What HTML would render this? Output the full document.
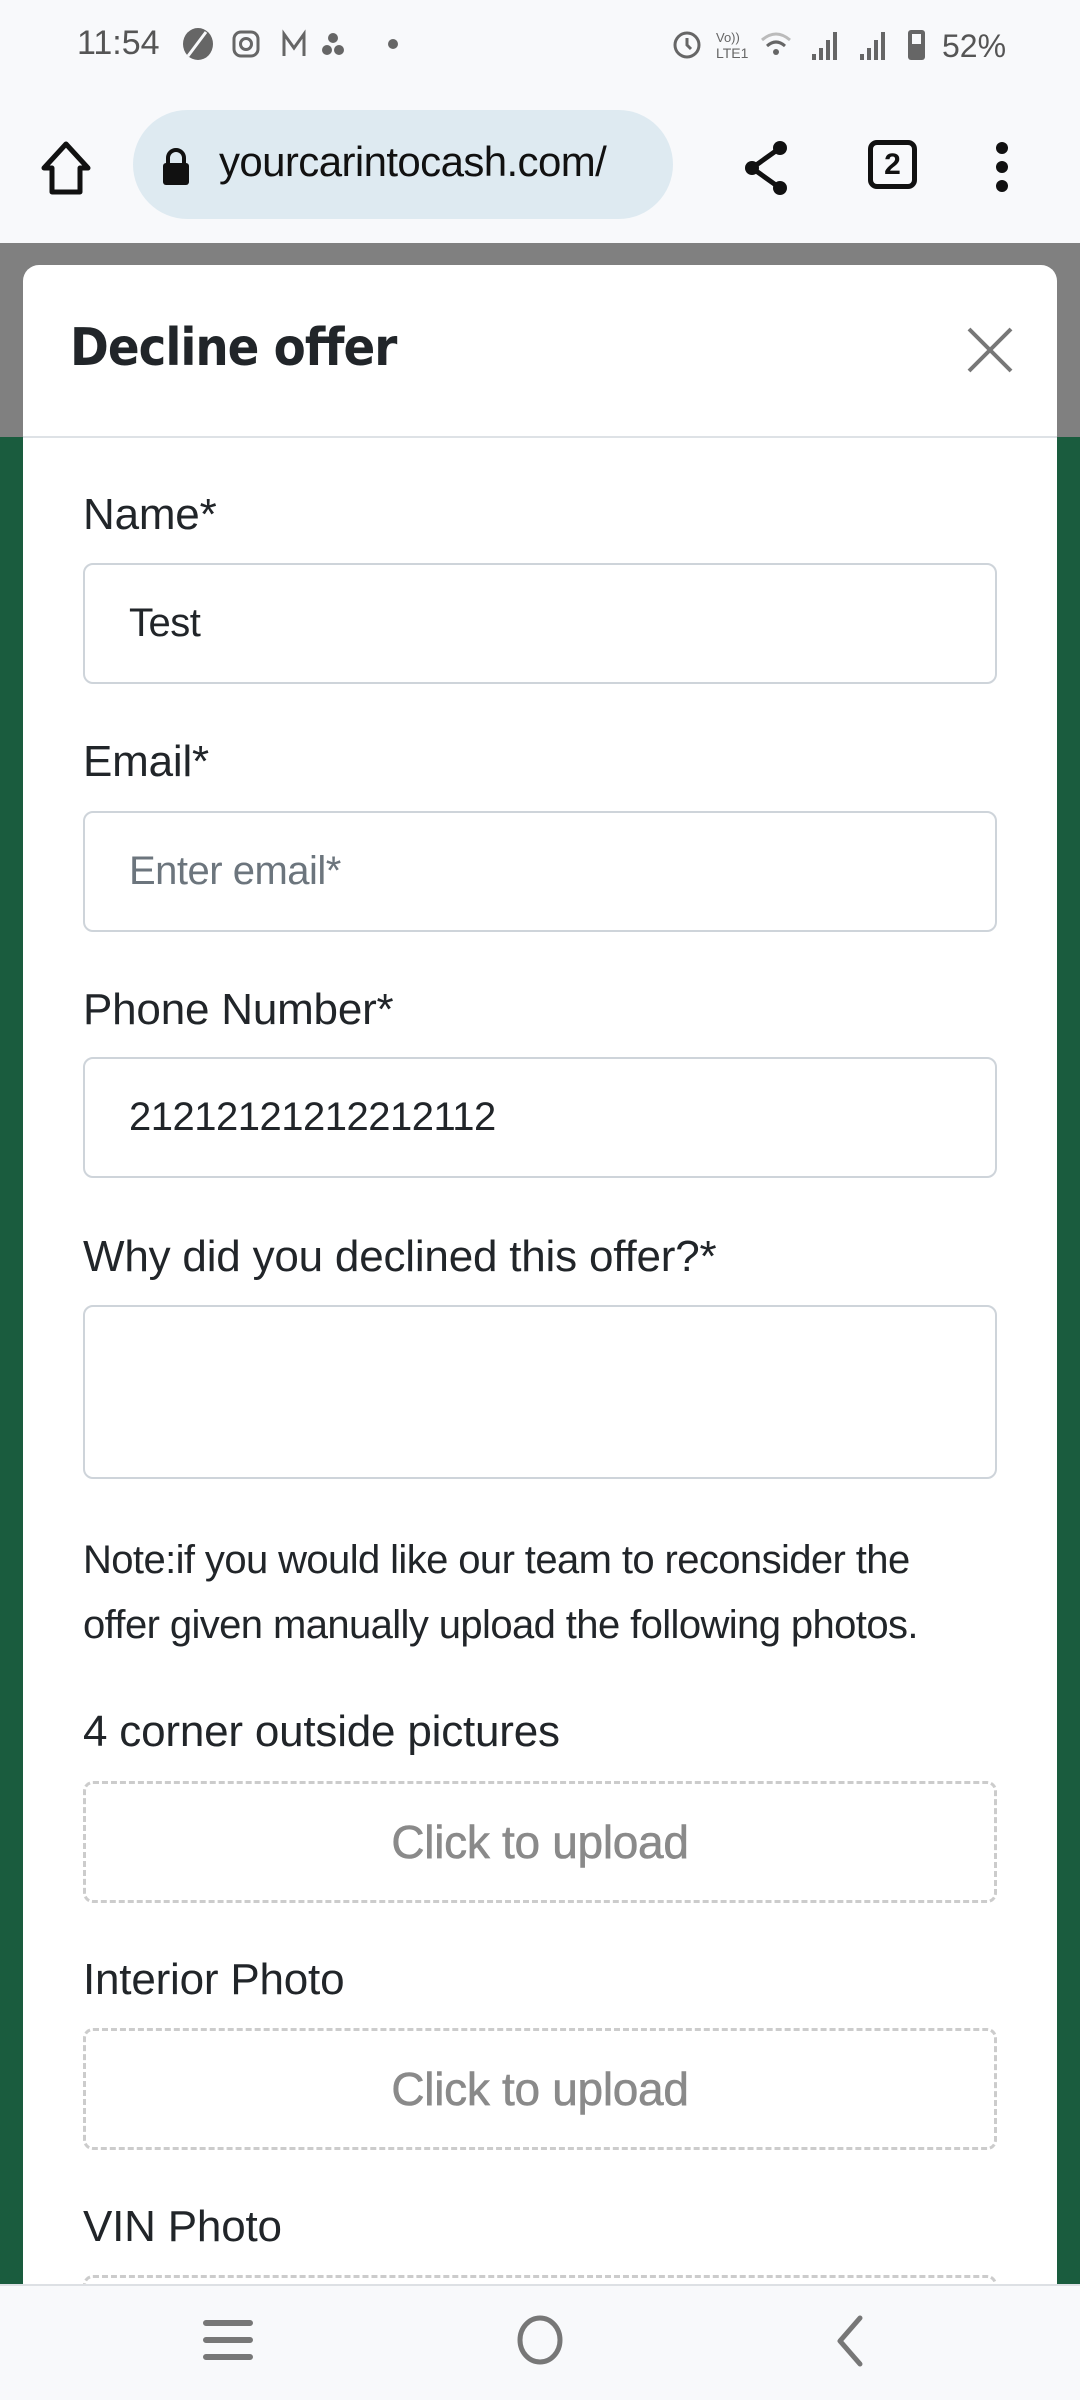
<!DOCTYPE html>
<html><head><meta charset="utf-8"><style>
*{margin:0;padding:0;box-sizing:border-box}
body{width:1080px;height:2400px;overflow:hidden;background:#1a5c3e;font-family:"Liberation Sans",sans-serif;color:#212529;position:relative}
.abs{position:absolute}
#status{left:0;top:0;width:1080px;height:243px;background:#f8f9fb}
#gray{left:0;top:243px;width:1080px;height:194px;background:#808080}
#modal{left:23px;top:265px;width:1034px;height:2100px;background:#fff;border-radius:16px 16px 0 0}
.lbl{position:absolute;left:83px;font-size:44px;letter-spacing:-0.2px;color:#212529;white-space:nowrap}
.inp{position:absolute;left:83px;width:914px;height:121px;border:2px solid #ced4da;border-radius:10px;font-size:40px;padding-left:44px;line-height:117px;letter-spacing:-0.5px;white-space:nowrap}
.up{position:absolute;left:83px;width:914px;height:122px;border:3px dashed #ccc;border-radius:10px;text-align:center;line-height:116px;font-size:46px;color:#8a8a8a;letter-spacing:-0.3px;-webkit-text-stroke:0.6px #8a8a8a}
#nav{left:0;top:2284px;width:1080px;height:116px;background:#f8f9fb;border-top:2px solid #dde0e4}
</style></head><body>
<div id="status" class="abs"></div>
<div class="abs" style="left:77px;top:24px;font-size:34px;color:#555">11:54</div>
<svg class="abs" style="left:180px;top:26px" width="240" height="36" viewBox="0 0 240 36">
<ellipse cx="18" cy="18" rx="15" ry="16" fill="#666"/><path d="M8 30 L26 6" stroke="#f8f9fb" stroke-width="3"/>
<rect x="54" y="6" width="24" height="24" rx="7" fill="none" stroke="#666" stroke-width="3"/><circle cx="66" cy="18" r="5.5" fill="none" stroke="#666" stroke-width="3"/>
<path d="M104 30 V8 L114 22 L124 8 V30" fill="none" stroke="#666" stroke-width="3"/>
<circle cx="153" cy="12" r="5" fill="#666"/><circle cx="147" cy="24" r="5" fill="#666"/><circle cx="159" cy="24" r="5" fill="#666"/>
<circle cx="213" cy="18" r="5" fill="#666"/></svg>
<svg class="abs" style="left:670px;top:24px" width="340" height="40" viewBox="0 0 340 40">
<circle cx="17" cy="21" r="12" fill="none" stroke="#666" stroke-width="3"/><path d="M17 14 V21 L21 25" stroke="#666" stroke-width="3" fill="none"/>
<text x="46" y="18" font-size="13" fill="#666" font-family="Liberation Sans">Vo))</text><text x="46" y="34" font-size="14" fill="#666" font-family="Liberation Sans">LTE1</text>
<path d="M92 16 Q106 4 120 16" stroke="#bbb" stroke-width="3" fill="none"/><path d="M97 22 Q106 14 115 22" stroke="#666" stroke-width="3" fill="none"/><circle cx="106" cy="28" r="3" fill="#666"/>
<rect x="142" y="30" width="4" height="6" fill="#666"/><rect x="149" y="24" width="4" height="12" fill="#666"/><rect x="156" y="16" width="4" height="20" fill="#666"/><rect x="163" y="8" width="4" height="28" fill="#666"/>
<rect x="190" y="30" width="4" height="6" fill="#666"/><rect x="197" y="24" width="4" height="12" fill="#666"/><rect x="204" y="16" width="4" height="20" fill="#666"/><rect x="211" y="8" width="4" height="28" fill="#666"/>
<rect x="238" y="6" width="17" height="30" rx="3" fill="#666"/><rect x="242" y="10" width="9" height="10" fill="#f8f9fb"/>
<text x="272" y="33" font-size="32" fill="#555" font-family="Liberation Sans">52%</text></svg>
<svg class="abs" style="left:38px;top:138px" width="56" height="60" viewBox="0 0 56 60"><path d="M28 6 L50 30 H42 V54 H14 V30 H6 Z" fill="none" stroke="#111" stroke-width="5" stroke-linejoin="round"/></svg>
<div class="abs" style="left:133px;top:110px;width:540px;height:109px;border-radius:55px;background:#deeaf1"></div>
<svg class="abs" style="left:160px;top:146px" width="32" height="40" viewBox="0 0 32 40"><path d="M8 18 V12 a8 8 0 0 1 16 0 V18" stroke="#111" stroke-width="4" fill="none"/><rect x="3" y="17" width="26" height="22" rx="3" fill="#111"/></svg>
<div class="abs" style="left:219px;top:138px;font-size:42px;color:#111;letter-spacing:-0.6px">yourcarintocash.com/</div>
<svg class="abs" style="left:740px;top:138px" width="56" height="60" viewBox="0 0 56 60"><circle cx="40" cy="10" r="7" fill="#111"/><circle cx="12" cy="30" r="7" fill="#111"/><circle cx="40" cy="50" r="7" fill="#111"/><path d="M40 10 L12 30 L40 50" stroke="#111" stroke-width="5" fill="none"/></svg>
<div class="abs" style="left:868px;top:140px;width:49px;height:49px;border:5px solid #111;border-radius:9px;text-align:center;font-size:30px;font-weight:bold;line-height:39px;color:#111">2</div>
<svg class="abs" style="left:990px;top:140px" width="24" height="60" viewBox="0 0 24 60"><circle cx="12" cy="8" r="6" fill="#111"/><circle cx="12" cy="27" r="6" fill="#111"/><circle cx="12" cy="46" r="6" fill="#111"/></svg>
<div id="gray" class="abs"></div>
<div id="modal" class="abs"></div>
<div class="abs" style="left:23px;top:436px;width:1034px;height:2px;background:#dee2e6"></div>
<div class="abs" style="left:70px;top:318px;font-size:52px;font-weight:bold;color:#212529;letter-spacing:-1px;font-family:'DejaVu Sans Condensed','Liberation Sans',sans-serif">Decline offer</div>
<svg class="abs" style="left:964px;top:324px" width="52" height="52" viewBox="0 0 52 52"><path d="M5 5 L47 47 M47 5 L5 47" stroke="#777" stroke-width="4"/></svg>
<div class="lbl" style="top:490px">Name*</div>
<div class="inp" style="top:563px;color:#212529">Test</div>
<div class="lbl" style="top:737px">Email*</div>
<div class="inp" style="top:811px;color:#6c757d">Enter email*</div>
<div class="lbl" style="top:985px">Phone Number*</div>
<div class="inp" style="top:1057px;color:#212529">21212121212212112</div>
<div class="lbl" style="top:1232px">Why did you declined this offer?*</div>
<div class="inp" style="top:1305px;height:174px"></div>
<div class="abs" style="left:83px;top:1528px;font-size:40px;line-height:65px;letter-spacing:-0.6px;white-space:nowrap">Note:if you would like our team to reconsider the<br>offer given manually upload the following photos.</div>
<div class="lbl" style="top:1707px">4 corner outside pictures</div>
<div class="up" style="top:1781px">Click to upload</div>
<div class="lbl" style="top:1955px">Interior Photo</div>
<div class="up" style="top:2028px">Click to upload</div>
<div class="lbl" style="top:2202px">VIN Photo</div>
<div class="up" style="top:2275px"></div>
<div id="nav" class="abs"></div>
<svg class="abs" style="left:200px;top:2315px" width="56" height="50" viewBox="0 0 56 50"><path d="M6 8 H50 M6 25 H50 M6 42 H50" stroke="#777" stroke-width="6" stroke-linecap="round"/></svg>
<svg class="abs" style="left:514px;top:2314px" width="52" height="52" viewBox="0 0 52 52"><ellipse cx="26" cy="26" rx="20" ry="22" fill="none" stroke="#777" stroke-width="5"/></svg>
<svg class="abs" style="left:830px;top:2312px" width="40" height="58" viewBox="0 0 40 58"><path d="M30 6 L10 29 L30 52" fill="none" stroke="#777" stroke-width="5" stroke-linecap="round" stroke-linejoin="round"/></svg>
</body></html>
